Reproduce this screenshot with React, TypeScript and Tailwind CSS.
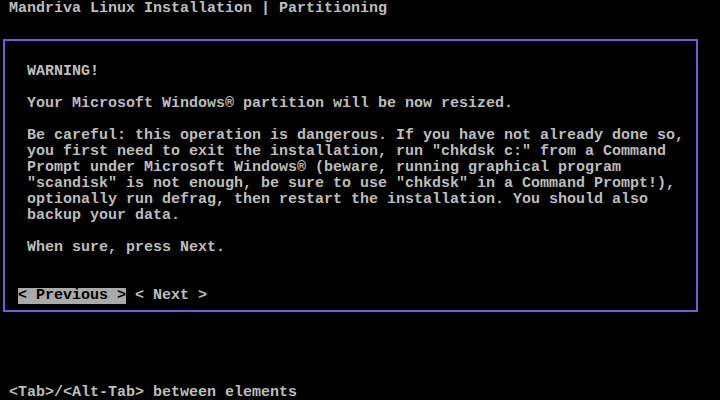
import React from "react";

const body = `Your Microsoft Windows® partition will be now resized.

Be careful: this operation is dangerous. If you have not already done so,
you first need to exit the installation, run "chkdsk c:" from a Command
Prompt under Microsoft Windows® (beware, running graphical program
"scandisk" is not enough, be sure to use "chkdsk" in a Command Prompt!),
optionally run defrag, then restart the installation. You should also
backup your data.

When sure, press Next.`;

export default function App() {
  return (
    <div
      className="flex flex-col h-[400px] w-[720px] bg-black text-[#bdbdbd] overflow-hidden text-[15px] leading-4 whitespace-pre font-bold pt-px"
      style={{ fontFamily: '"Liberation Mono", "DejaVu Sans Mono", monospace' }}
    >
      <div className="h-4 pl-[9px]">Mandriva Linux Installation | Partitioning</div>
      <div className="h-4" />
      <div className="ml-[3px] mt-[6px] w-[695px] h-[273px] border-2 border-[#6a62d4] pl-[13px] pt-[7px]">
        <div className="h-4" />
        <div className="pl-[9px]">WARNING!</div>
        <div className="h-4" />
        <div className="pl-[9px]">{body}</div>
        <div className="h-4" />
        <div className="h-4" />
        <div className="flex h-4">
          <span className="bg-[#aaaaaa] text-black">{"< Previous >"}</span>
          <span>{" < Next >"}</span>
        </div>
      </div>
      <div className="mt-auto h-4 pl-[9px] mb-[-1px]">{"<Tab>/<Alt-Tab> between elements"}</div>
    </div>
  );
}
